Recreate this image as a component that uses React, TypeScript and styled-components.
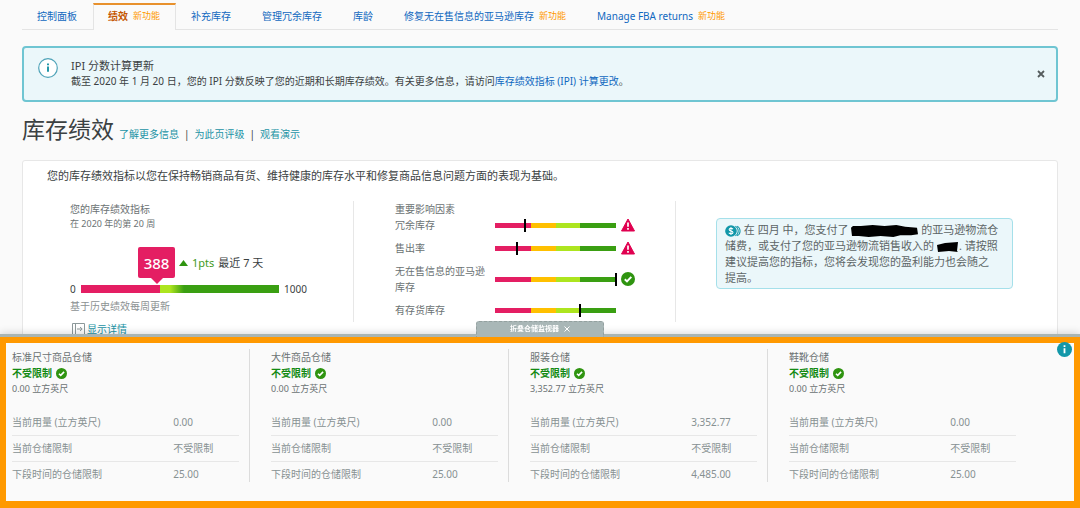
import React from "react";
import styled, { createGlobalStyle } from "styled-components";

const GlobalStyle = createGlobalStyle`
  *, *::before, *::after { box-sizing: border-box; }
  body {
    margin: 0;
    background: #fafafa;
    color: #3b4142;
    font-family: "Noto Sans", "Noto Sans CJK SC", sans-serif;
    font-size: 10px;
    line-height: 16px;
  }
  h1, h2, h3, p { margin: 0; font-size: 10px; font-weight: 400; }
  a { text-decoration: none; }
  button { font-family: inherit; cursor: pointer; }
`;

const Page = styled.main`
  padding: 3px 22px 0;
`;

const Tabs = styled.nav`
  display: flex;
  height: 27px;
  border-bottom: 1px solid #e4e4e4;
`;

const Tab = styled.a<{ $active?: boolean }>`
  display: flex;
  align-items: center;
  gap: 5px;
  height: 27px;
  padding: 0 15px 3px 14px;
  border: 1px solid ${(p) => (p.$active ? "#e4e4e4" : "transparent")};
  border-top: 2px solid ${(p) => (p.$active ? "#e8912d" : "transparent")};
  border-bottom: 0;
  background: ${(p) => (p.$active ? "#fafafa" : "transparent")};
  color: ${(p) => (p.$active ? "#c45500" : "#1068bf")};
  font-weight: ${(p) => (p.$active ? 700 : 400)};
  white-space: nowrap;
`;

const NewTag = styled.span`
  color: #ff9900;
  font-size: 9px;
  font-weight: 400;
`;

const Alert = styled.section`
  display: flex;
  align-items: flex-start;
  margin-top: 16px;
  height: 56px;
  padding: 10px 10px 0 14px;
  border: 2px solid #6fc5d2;
  border-radius: 4px;
  background: #ebf7fa;
`;

const AlertBody = styled.div`
  flex: 1;
  margin-left: 13px;
`;

const AlertTitle = styled.h2`
  font-size: 11px;
  line-height: 15px;
`;

const BlueLink = styled.a`
  color: #1068bf;
`;

const CloseButton = styled.button`
  align-self: flex-start;
  width: 10px;
  height: 10px;
  margin-top: 11px;
  padding: 0;
  border: 0;
  background: none;
  svg { display: block; }
`;

const Heading = styled.header`
  display: flex;
  align-items: baseline;
  margin-top: 10px;
  line-height: 34px;
`;

const Title = styled.h1`
  font-size: 23px;
  line-height: 34px;
`;

const HeadLinks = styled.div`
  display: flex;
  gap: 5px;
  margin-left: 5px;
`;

const TealLink = styled.a`
  color: #1a93a5;
`;

const Card = styled.section`
  margin-top: 9px;
  padding-top: 7px;
  padding-bottom: 20px;
  border: 1px solid #e7e7e7;
  border-radius: 3px;
  background: #fff;
`;

const Intro = styled.p`
  padding: 0 24px;
  font-size: 11px;
`;

const Metrics = styled.div`
  display: grid;
  grid-template-columns: 330fr 322fr 382fr;
  align-items: start;
  margin-top: 17px;
`;

const Score = styled.div`
  padding: 0 40px 0 47px;
  color: #6b7273;
`;

const SubLine = styled.p`
  font-size: 9px;
  line-height: 14px;
`;

const ScoreRow = styled.div`
  display: flex;
  align-items: center;
  gap: 4px;
  margin: 16px 0 3px;
  padding-left: 68px;
  color: #3b4142;
  font-size: 11px;
`;

const ScoreBadge = styled.strong`
  position: relative;
  width: 37px;
  height: 31px;
  border-radius: 2px;
  background: #e41e63;
  color: #fff;
  font-size: 15px;
  font-weight: 500;
  line-height: 32px;
  text-align: center;
  &::after {
    content: "";
    position: absolute;
    top: 100%;
    left: 50%;
    margin-left: -6px;
    border: 6px solid transparent;
    border-top-color: #e41e63;
    border-bottom: 0;
  }
`;

const Points = styled.span`
  color: #3f9a1e;
`;

const GaugeRow = styled.div`
  display: flex;
  align-items: center;
  gap: 5px;
  width: 237px;
  color: #3b4142;
`;

const Gauge = styled.div`
  flex: 1;
  height: 8px;
  background: linear-gradient(90deg, #e41e63 40%, #ade51f 40% 45%, #3a9f12 52%);
`;

const Caption = styled.p`
  margin-top: 2px;
  color: #8b9192;
  line-height: 14px;
`;

const DetailLink = styled(TealLink)`
  display: inline-flex;
  align-items: center;
  gap: 2px;
  margin: 8px 0 0 2px;
`;

const Factors = styled.div`
  min-height: 121px;
  padding-left: 41px;
  border-left: 1px solid #e7e7e7;
  color: #6b7273;
`;

const FactorList = styled.ul`
  display: grid;
  gap: 7px;
  margin: 0;
  padding: 0;
  list-style: none;
`;

const Factor = styled.li`
  display: grid;
  grid-template-columns: 95px 121px 14px;
  column-gap: 5px;
  align-items: center;
  svg { display: block; }
`;

const FactorBar = styled.div`
  position: relative;
  height: 5px;
  background: linear-gradient(
    90deg,
    #e41e63 30%,
    #ffc000 30% 50%,
    #ade51f 50% 70%,
    #3a9f12 70%
  );
`;

const Needle = styled.span`
  position: absolute;
  top: -4px;
  width: 2px;
  height: 13px;
  margin-left: -1px;
  background: #000;
`;

const Advice = styled.div`
  min-height: 121px;
  padding: 17px 44px 0 40px;
  border-left: 1px solid #e7e7e7;
`;

const AdviceBox = styled.p`
  padding: 3px 13px 2px 8px;
  border: 1px solid #a5e0ea;
  border-radius: 4px;
  background: #ebf7fa;
  color: #5d6566;
  font-size: 11px;
  svg { vertical-align: -3px; }
`;

const Dock = styled.section`
  position: fixed;
  right: 0;
  bottom: 0;
  left: 0;
  border-top: 3px solid #a9b5b3;
  box-shadow: 0 -1px 8px rgba(0, 0, 0, 0.16);
`;

const DockToggle = styled.button`
  position: absolute;
  bottom: 100%;
  left: 50%;
  display: flex;
  align-items: center;
  justify-content: center;
  gap: 5px;
  width: 128px;
  height: 16px;
  padding: 0 0 2px;
  transform: translateX(-50%);
  border: 1px dashed #93a09f;
  border-bottom: 0;
  border-radius: 3px 3px 0 0;
  background: #a9b7b7;
  color: #fff;
  font-size: 7px;
  font-weight: 700;
  line-height: 12px;
`;

const DockFrame = styled.div`
  position: relative;
  display: grid;
  grid-template-columns: repeat(4, 1fr);
  padding: 6px 26px 19px 6px;
  border: 6px solid #ff9900;
  border-bottom-width: 7px;
  background: #fafafa;
`;

const InfoButton = styled.button`
  position: absolute;
  top: -1px;
  right: 2px;
  width: 15px;
  height: 15px;
  padding: 0;
  border: 0;
  background: none;
  svg { display: block; }
`;

const Storage = styled.article`
  margin-right: 21px;
  padding-right: 10px;
  border-right: 1px solid #dcdcdc;
  color: #6b7273;
  &:last-of-type { border-right-color: transparent; }
`;

const Status = styled.p`
  display: flex;
  align-items: center;
  gap: 4px;
  color: #128a12;
  font-weight: 700;
`;

const Volume = styled.p`
  font-size: 9px;
`;

const Usage = styled.table`
  width: 100%;
  margin-top: 13px;
  border-collapse: separate;
  border-spacing: 0;
  color: #879192;
  th, td {
    padding: 4px 0 5px;
    border-bottom: 1px solid #e7e7e7;
    font-weight: 400;
    text-align: left;
  }
  th { width: 71%; }
  tr:last-child > * { padding-bottom: 0; border-bottom: 0; }
`;

const CheckIcon = ({ size }: { size: number }) => (
  <svg width={size} height={size} viewBox="0 0 14 14" aria-hidden="true">
    <circle cx="7" cy="7" r="7" fill="#2f9410" />
    <path d="M3.8 7.3 6 9.4l4.3-4.5" fill="none" stroke="#fff" strokeWidth="2" />
  </svg>
);

const WarnIcon = () => (
  <svg width="14" height="14" viewBox="0 0 14 14" aria-hidden="true">
    <path d="M7 1 13.5 13H.5Z" fill="#e00050" stroke="#e00050" strokeLinejoin="round" />
    <path d="M7 4.6v4.2M7 10v1.8" stroke="#fff" strokeWidth="1.7" />
  </svg>
);

const AlertInfoIcon = () => (
  <svg width="20" height="20" viewBox="0 0 20 20" aria-hidden="true">
    <circle cx="10" cy="10" r="9.3" fill="#fff" stroke="#4fa3b8" strokeWidth="1.2" />
    <path d="M10 8.4v5.4M10 5.6v1.7" stroke="#1a93a5" strokeWidth="1.9" />
  </svg>
);

const InfoIcon = () => (
  <svg width="15" height="15" viewBox="0 0 15 15" aria-hidden="true">
    <circle cx="7.5" cy="7.5" r="7.5" fill="#1297a9" />
    <path d="M7.5 6.3v5M7.5 3.3v1.8" stroke="#fff" strokeWidth="1.8" />
  </svg>
);

const CloseIcon = () => (
  <svg width="10" height="10" viewBox="0 0 10 10" aria-hidden="true">
    <path d="m2 2 6 6M8 2 2 8" stroke="#555c5d" strokeWidth="1.8" />
  </svg>
);

const ThinCloseIcon = () => (
  <svg width="6" height="6" viewBox="0 0 6 6" aria-hidden="true">
    <path d="m.5.5 5 5M5.5.5l-5 5" stroke="#fff" />
  </svg>
);

const UpIcon = () => (
  <svg width="9" height="6" viewBox="0 0 9 6" aria-hidden="true">
    <path d="M4.5 0 9 6H0Z" fill="#2f9410" />
  </svg>
);

const ExpandIcon = () => (
  <svg width="13" height="12" viewBox="0 0 13 12" aria-hidden="true">
    <path d="M.5.5h12v11H.5ZM3.5.5v11M5 6h5M8 4l2.2 2L8 8" fill="none" stroke="#8d999a" />
  </svg>
);

const CoinsIcon = () => (
  <svg width="16" height="12" viewBox="0 0 17 13" aria-hidden="true">
    <path d="M11 1.2a6 6 0 0 1 0 10.6M13 1.2a6 6 0 0 1 0 10.6" fill="none" stroke="#1297a9" strokeWidth="1.1" />
    <circle cx="6.3" cy="6.5" r="6.3" fill="#1297a9" />
    <path
      d="M8.500 4.600C8 3.800 7.200 3.600 6.300 3.600 5 3.600 4.300 4.200 4.300 5c0 2 4.200 1 4.200 3 0 .9-.9 1.500-2.200 1.500-1 0-1.900-.4-2.300-1.200M6.300 2.300v8.500"
      fill="none"
      stroke="#fff"
      strokeWidth="1.1"
    />
  </svg>
);

const WideScribble = () => (
  <svg width="67" height="12" viewBox="0 0 68 13" preserveAspectRatio="none" aria-hidden="true">
    <path d="M0 3 2 1 10 1 22 0 34 1 46 0 55 2 67 3 68 10 61 11 50 11 43 13 30 12 18 13 8 12 1 12Z" />
  </svg>
);

const ShortScribble = () => (
  <svg width="22" height="11" viewBox="0 0 22 11" aria-hidden="true">
    <path d="M0 3 8 1 21 0 20 9 21 10 12 9 1 10Z" />
  </svg>
);

const tabs = [
  { label: "控制面板" },
  { label: "绩效", isNew: true, active: true },
  { label: "补充库存" },
  { label: "管理冗余库存" },
  { label: "库龄" },
  { label: "修复无在售信息的亚马逊库存", isNew: true },
  { label: "Manage FBA returns", isNew: true },
];

const factors = [
  { label: "冗余库存", value: 25, icon: <WarnIcon /> },
  { label: "售出率", value: 18, icon: <WarnIcon /> },
  { label: "无在售信息的亚马逊库存", value: 100, icon: <CheckIcon size={14} /> },
  { label: "有存货库存", value: 70, icon: null },
];

const storages = [
  { name: "标准尺寸商品仓储", used: "0.00", next: "25.00" },
  { name: "大件商品仓储", used: "0.00", next: "25.00" },
  { name: "服装仓储", used: "3,352.77", next: "4,485.00" },
  { name: "鞋靴仓储", used: "0.00", next: "25.00" },
];

export default function App() {
  return (
    <>
      <GlobalStyle />
      <Page>
        <Tabs>
          {tabs.map((t) => (
            <Tab key={t.label} href="#" $active={t.active}>
              {t.label}
              {t.isNew && <NewTag>新功能</NewTag>}
            </Tab>
          ))}
        </Tabs>

        <Alert>
          <AlertInfoIcon />
          <AlertBody>
            <AlertTitle>IPI 分数计算更新</AlertTitle>
            <p>
              截至 2020 年 1 月 20 日，您的 IPI 分数反映了您的近期和长期库存绩效。有关更多信息，请访问
              <BlueLink href="#">库存绩效指标 (IPI) 计算更改</BlueLink>。
            </p>
          </AlertBody>
          <CloseButton aria-label="关闭">
            <CloseIcon />
          </CloseButton>
        </Alert>

        <Heading>
          <Title>库存绩效</Title>
          <HeadLinks>
            <TealLink href="#">了解更多信息</TealLink>
            <span>|</span>
            <TealLink href="#">为此页评级</TealLink>
            <span>|</span>
            <TealLink href="#">观看演示</TealLink>
          </HeadLinks>
        </Heading>

        <Card>
          <Intro>
            您的库存绩效指标以您在保持畅销商品有货、维持健康的库存水平和修复商品信息问题方面的表现为基础。
          </Intro>
          <Metrics>
            <Score>
              <h3>您的库存绩效指标</h3>
              <SubLine>在 2020 年的第 20 周</SubLine>
              <ScoreRow>
                <ScoreBadge>388</ScoreBadge>
                <UpIcon />
                <Points>1pts</Points>
                <span>最近 7 天</span>
              </ScoreRow>
              <GaugeRow>
                <span>0</span>
                <Gauge />
                <span>1000</span>
              </GaugeRow>
              <Caption>基于历史绩效每周更新</Caption>
              <DetailLink href="#">
                <ExpandIcon />
                显示详情
              </DetailLink>
            </Score>

            <Factors>
              <h3>重要影响因素</h3>
              <FactorList>
                {factors.map((f) => (
                  <Factor key={f.label}>
                    <span>{f.label}</span>
                    <FactorBar>
                      <Needle style={{ left: `${f.value}%` }} />
                    </FactorBar>
                    {f.icon}
                  </Factor>
                ))}
              </FactorList>
            </Factors>

            <Advice>
              <AdviceBox>
                <CoinsIcon /> 在 四月 中，您支付了 <WideScribble /> 的亚马逊物流仓储费，或支付了您的亚马逊物流销售收入的{" "}
                <ShortScribble />. 请按照建议提高您的指标，您将会发现您的盈利能力也会随之提高。
              </AdviceBox>
            </Advice>
          </Metrics>
        </Card>
      </Page>

      <Dock>
        <DockToggle>
          折叠仓储监视器
          <ThinCloseIcon />
        </DockToggle>
        <DockFrame>
          {storages.map((s) => (
            <Storage key={s.name}>
              <h3>{s.name}</h3>
              <Status>
                不受限制
                <CheckIcon size={11} />
              </Status>
              <Volume>{s.used} 立方英尺</Volume>
              <Usage>
                <tbody>
                  <tr>
                    <th scope="row">当前用量 (立方英尺)</th>
                    <td>{s.used}</td>
                  </tr>
                  <tr>
                    <th scope="row">当前仓储限制</th>
                    <td>不受限制</td>
                  </tr>
                  <tr>
                    <th scope="row">下段时间的仓储限制</th>
                    <td>{s.next}</td>
                  </tr>
                </tbody>
              </Usage>
            </Storage>
          ))}
          <InfoButton aria-label="信息">
            <InfoIcon />
          </InfoButton>
        </DockFrame>
      </Dock>
    </>
  );
}
